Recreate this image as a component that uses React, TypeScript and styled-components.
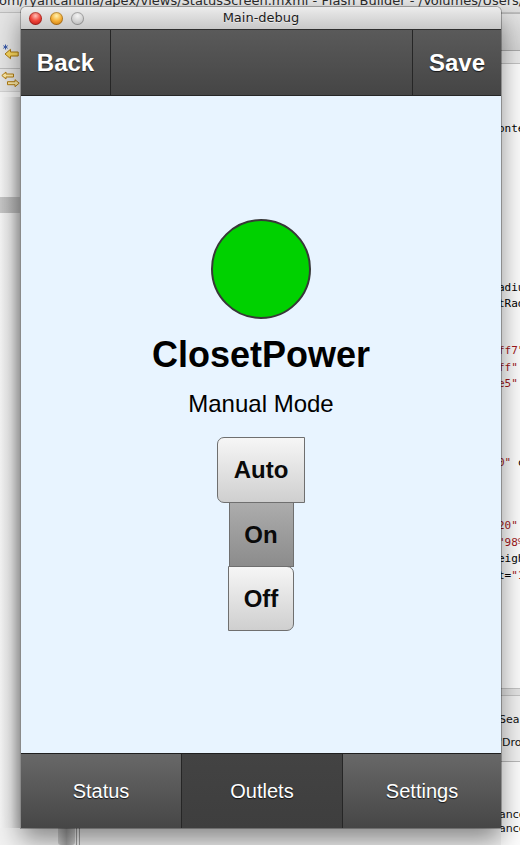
import React from 'react';
import styled, { createGlobalStyle } from 'styled-components';

const Global = createGlobalStyle`
  *, *::before, *::after { box-sizing: border-box; }
  html, body { margin: 0; padding: 0; }
  body {
    width: 520px; height: 845px; overflow: hidden;
    background: #efefef;
    font-family: "Liberation Sans", Arial, sans-serif;
  }
`;

/* ---------- background: Flash Builder workbench ---------- */

const Desktop = styled.div`
  position: relative;
  width: 520px;
  height: 845px;
  overflow: hidden;
  display: flex;
  flex-direction: column;
  background: #f0f0f0;
`;

const AppTitleStrip = styled.div`
  flex: none;
  height: 13px;
  overflow: hidden;
  white-space: nowrap;
  background: linear-gradient(#e9e9e9, #dcdcdc);
  border-bottom: 1px solid #bdbdbd;
`;

const AppTitle = styled.div`
  font: 13px/13px "DejaVu Sans", sans-serif;
  color: #2b2b2b;
  margin-top: -6px;
  margin-left: -1px;
`;

const Workbench = styled.div`
  flex: 1;
  min-height: 0;
  display: flex;
`;

const LeftDock = styled.div`
  flex: none;
  width: 20px;
  display: flex;
  flex-direction: column;
`;

const ToolRow = styled.div<{ $h: number; $line: string; $pb: number }>`
  flex: none;
  height: ${(p) => p.$h}px;
  display: flex;
  align-items: flex-end;
  justify-content: center;
  padding-bottom: ${(p) => p.$pb}px;
  background: #e5e5e5;
  border-bottom: 1px solid ${(p) => p.$line};
`;

const DockGap = styled.div`
  flex: none;
  height: 5px;
  background: #f3f3f3;
`;

const DockPanel = styled.div`
  flex: 1;
  display: flex;
  flex-direction: column;
  background: linear-gradient(90deg, #f5f5f5 0%, #e8e8e8 55%, #c4c4c4 100%);
`;

const DockBand = styled.div`
  flex: none;
  margin-top: 100px;
  height: 16px;
  background: linear-gradient(90deg, #c6c6c6, #a9a9a9);
`;

const DockFoot = styled.div`
  flex: none;
  height: 17px;
  background: #f2f2f2;
`;

const EditorArea = styled.div`
  flex: 1;
  display: flex;
  flex-direction: column;
  background: #f6f6f6;
`;

const EditorFill = styled.div`
  flex: 1;
`;

const BottomStrip = styled.div`
  flex: none;
  height: 17px;
  display: flex;
  align-items: stretch;
  padding-left: 38px;
  background: #f3f3f3;
`;

const ScrollKnob = styled.div`
  width: 17px;
  background: linear-gradient(90deg, #cfcfcf, #a4a4a4 50%, #cdcdcd);
  border-radius: 0 0 3px 3px;
`;

const KnobRail = styled.div`
  width: 4px;
  margin-left: 1px;
  border-left: 1px solid #a0a0a0;
  border-right: 1px solid #a0a0a0;
`;

const RightStrip = styled.div`
  flex: none;
  width: 19px;
  display: flex;
  flex-direction: column;
  overflow: hidden;
`;

const RHeader = styled.div`
  flex: none;
  height: 38px;
  background: linear-gradient(#e3e3e3, #d3d3d3);
  border-top: 1px solid #b7b7b7;
  border-bottom: 1px solid #a9a9a9;
`;

const RTabs = styled.div`
  flex: none;
  height: 13px;
  background: #eaeaea;
  border-bottom: 1px solid #c2c2c2;
`;

const RCode = styled.div`
  flex: none;
  height: 624px;
  background: #fcfcfc;
  display: flex;
  flex-direction: column;
`;

const CodeLine = styled.div<{ $mt: number }>`
  margin-top: ${(p) => p.$mt}px;
  margin-left: -3px;
  height: 16px;
  font: 11px/16px "DejaVu Sans Mono", monospace;
  white-space: pre;
  color: #000;
`;

const Str = styled.span`
  color: #a1171a;
`;

const RSplitter = styled.div`
  flex: none;
  height: 8px;
  background: #e4e4e4;
  border-top: 1px solid #c4c4c4;
  border-bottom: 1px solid #c4c4c4;
`;

const RSearch = styled.div`
  flex: none;
  height: 66px;
  background: #f2f2f2;
  border-bottom: 1px solid #b9b9b9;
  display: flex;
  flex-direction: column;
`;

const RRest = styled.div`
  flex: 1;
  background: #fdfdfd;
  display: flex;
  flex-direction: column;
`;

const PanelText = styled.div<{ $mt: number }>`
  margin-top: ${(p) => p.$mt}px;
  margin-left: -2px;
  font: 11px/14px "DejaVu Sans", sans-serif;
  color: #111;
  white-space: pre;
`;

/* ---------- the AIR debug window ---------- */

const Window = styled.div`
  position: absolute;
  left: 21px;
  top: 7px;
  width: 480px;
  height: 821px;
  display: flex;
  flex-direction: column;
  border-radius: 5px 5px 0 0;
  overflow: hidden;
  box-shadow: 0 12px 26px rgba(0, 0, 0, 0.45), 0 0 0 1px rgba(0, 0, 0, 0.28);
`;

const TitleBar = styled.div`
  flex: none;
  height: 22px;
  display: grid;
  grid-template-columns: 1fr auto 1fr;
  align-items: center;
  background: linear-gradient(#ececec, #c8c8c8);
`;

const Lights = styled.div`
  display: flex;
  gap: 8px;
  padding-left: 8px;
`;

const Light = styled.span<{ $c: 'red' | 'amber' | 'off' }>`
  width: 13px;
  height: 13px;
  border-radius: 50%;
  background: ${(p) =>
    p.$c === 'red'
      ? 'radial-gradient(circle at 50% 30%, #ffc0b6 0%, #f0453a 45%, #b01010 100%)'
      : p.$c === 'amber'
      ? 'radial-gradient(circle at 50% 30%, #fff2b0 0%, #f6b23a 45%, #c06800 100%)'
      : 'radial-gradient(circle at 50% 30%, #f4f4f4 0%, #d2d2d2 50%, #a8a8a8 100%)'};
  box-shadow: inset 0 0 0 1px rgba(0, 0, 0, 0.25);
`;

const WinTitle = styled.div`
  font: 13px/22px "DejaVu Sans", sans-serif;
  color: #1c1c1c;
  text-shadow: 0 1px 0 rgba(255, 255, 255, 0.5);
`;

const ActionBar = styled.div`
  flex: none;
  height: 67px;
  display: grid;
  grid-template-columns: 90px 1fr 89px;
  background: linear-gradient(#5a5a5a, #454545);
  border-top: 1px solid #2e2e2e;
  border-bottom: 1px solid #262626;
`;

const NavButton = styled.div<{ $side: 'left' | 'right' }>`
  display: flex;
  align-items: center;
  justify-content: center;
  ${(p) => (p.$side === 'left' ? 'border-right' : 'border-left')}: 1px solid #262626;
  font: bold 24px/1 "Liberation Sans", Arial, sans-serif;
  color: #fff;
  text-shadow: 0 1px 1px rgba(0, 0, 0, 0.7);
`;

const Content = styled.div`
  flex: 1;
  display: flex;
  flex-direction: column;
  align-items: center;
  padding-top: 123px;
  background: #e8f4ff;
`;

const StatusLamp = styled.div<{ $on: boolean }>`
  width: 100px;
  height: 100px;
  border-radius: 50%;
  border: 2px solid #383838;
  background: ${(p) => (p.$on ? '#00d100' : '#c00000')};
`;

const DeviceName = styled.div`
  margin-top: 16px;
  font: bold 36px/40px "Liberation Sans", Arial, sans-serif;
  color: #000;
`;

const ModeLabel = styled.div`
  margin-top: 15px;
  font: 24px/28px "Liberation Sans", Arial, sans-serif;
  color: #000;
`;

const ModeBar = styled.div`
  margin-top: 19px;
  display: flex;
  flex-direction: column;
  align-items: center;
`;

const ModeButton = styled.div<{ $pos: 'first' | 'mid' | 'last'; $w: number; $h: number; $selected: boolean }>`
  width: ${(p) => p.$w}px;
  height: ${(p) => p.$h}px;
  display: flex;
  align-items: center;
  justify-content: center;
  margin-top: ${(p) => (p.$pos === 'first' ? 0 : -1)}px;
  border: 1px solid #6f6f6f;
  border-radius: ${(p) =>
    p.$pos === 'first' ? '7px 0 0 7px' : p.$pos === 'last' ? '0 7px 7px 0' : '0'};
  background: ${(p) =>
    p.$selected
      ? 'linear-gradient(#acacac, #8c8c8c)'
      : 'linear-gradient(#f6f6f6, #cfcfcf)'};
  font: bold 24px/1 "Liberation Sans", Arial, sans-serif;
  color: #0a0a0a;
`;

const TabBar = styled.div`
  flex: none;
  height: 75px;
  display: grid;
  grid-template-columns: 160px 161px 1fr;
  border-top: 1px solid #1f1f1f;
`;

const Tab = styled.div<{ $active: boolean; $first: boolean }>`
  display: flex;
  align-items: center;
  justify-content: center;
  border-left: ${(p) => (p.$first ? 'none' : '1px solid #262626')};
  background: ${(p) =>
    p.$active ? 'linear-gradient(#434343, #3e3e3e)' : 'linear-gradient(#686868, #464646)'};
  font: 20px/1 "Liberation Sans", Arial, sans-serif;
  color: #fff;
  text-shadow: 0 1px 1px rgba(0, 0, 0, 0.75);
`;

/* ---------- icons ---------- */

const BackArrowIcon = () => (
  <svg width="17" height="16" viewBox="0 0 17 16">
    <path d="M3.5 0.5v5M1.3 1.7l4.4 2.6M5.7 1.7L1.3 4.3" stroke="#3a5aa8" strokeWidth="1" fill="none" />
    <path
      d="M3 10L8.5 5.3V8H16.2V12H8.5V14.7Z"
      fill="#f8d65e"
      stroke="#a97810"
      strokeWidth="1"
      strokeLinejoin="round"
    />
  </svg>
);

const SyncIcon = () => (
  <svg width="19" height="17" viewBox="0 0 19 17">
    <path d="M0.8 4.5L5 1V3H12.5V6H5V8Z" fill="#fbe7a4" stroke="#b27d10" strokeWidth="1" strokeLinejoin="round" />
    <path d="M18.2 12.2L14 8.7V10.7H6.5V13.7H14V15.7Z" fill="#fbe7a4" stroke="#b27d10" strokeWidth="1" strokeLinejoin="round" />
  </svg>
);

/* ---------- data ---------- */

const codeLines: { mt: number; parts: { t: string; s?: boolean }[] }[] = [
  { mt: 57, parts: [{ t: 'onte' }] },
  { mt: 143, parts: [{ t: 'adiu' }] },
  { mt: 0, parts: [{ t: 'tRad' }] },
  { mt: 31, parts: [{ t: 'ff7"', s: true }] },
  { mt: 1, parts: [{ t: 'ff"', s: true }] },
  { mt: 0, parts: [{ t: 'e5"', s: true }] },
  { mt: 63, parts: [{ t: '0"', s: true }, { t: ' c' }] },
  { mt: 47, parts: [{ t: '20"', s: true }] },
  { mt: 1, parts: [{ t: '"98%', s: true }] },
  { mt: 0, parts: [{ t: 'eigh' }] },
  { mt: 1, parts: [{ t: 't=' }, { t: '"1', s: true }] },
];

const modes = [
  { label: 'Auto', pos: 'first' as const, w: 88, h: 66 },
  { label: 'On', pos: 'mid' as const, w: 65, h: 65 },
  { label: 'Off', pos: 'last' as const, w: 66, h: 65 },
];

const tabs = ['Status', 'Outlets', 'Settings'];

export default function App() {
  const selectedMode = 'On';
  const activeTab = 'Outlets';
  return (
    <>
      <Global />
      <Desktop>
        <AppTitleStrip>
          <AppTitle>om/ryancanulla/apex/views/StatusScreen.mxml - Flash Builder - /Volumes/Users/</AppTitle>
        </AppTitleStrip>
        <Workbench>
          <LeftDock>
            <ToolRow $h={56} $line="#bcbcbc" $pb={8}>
              <BackArrowIcon />
            </ToolRow>
            <ToolRow $h={23} $line="#d2d2d2" $pb={3}>
              <SyncIcon />
            </ToolRow>
            <DockGap />
            <DockPanel>
              <DockBand />
            </DockPanel>
            <DockFoot />
          </LeftDock>
          <EditorArea>
            <EditorFill />
            <BottomStrip>
              <ScrollKnob />
              <KnobRail />
            </BottomStrip>
          </EditorArea>
          <RightStrip>
            <RHeader />
            <RTabs />
            <RCode>
              {codeLines.map((l, i) => (
                <CodeLine key={i} $mt={l.mt}>
                  {l.parts.map((p, j) => (p.s ? <Str key={j}>{p.t}</Str> : <span key={j}>{p.t}</span>))}
                </CodeLine>
              ))}
            </RCode>
            <RSplitter />
            <RSearch>
              <PanelText $mt={17}>Searc</PanelText>
              <PanelText $mt={9}>'Dro</PanelText>
            </RSearch>
            <RRest>
              <PanelText $mt={46}>ance</PanelText>
              <PanelText $mt={0}>ance</PanelText>
            </RRest>
          </RightStrip>
        </Workbench>

        <Window>
          <TitleBar>
            <Lights>
              <Light $c="red" />
              <Light $c="amber" />
              <Light $c="off" />
            </Lights>
            <WinTitle>Main-debug</WinTitle>
            <span />
          </TitleBar>
          <ActionBar>
            <NavButton $side="left">Back</NavButton>
            <span />
            <NavButton $side="right">Save</NavButton>
          </ActionBar>
          <Content>
            <StatusLamp $on />
            <DeviceName>ClosetPower</DeviceName>
            <ModeLabel>Manual Mode</ModeLabel>
            <ModeBar>
              {modes.map((m) => (
                <ModeButton key={m.label} $pos={m.pos} $w={m.w} $h={m.h} $selected={m.label === selectedMode}>
                  {m.label}
                </ModeButton>
              ))}
            </ModeBar>
          </Content>
          <TabBar>
            {tabs.map((t, i) => (
              <Tab key={t} $active={t === activeTab} $first={i === 0}>
                {t}
              </Tab>
            ))}
          </TabBar>
        </Window>
      </Desktop>
    </>
  );
}
